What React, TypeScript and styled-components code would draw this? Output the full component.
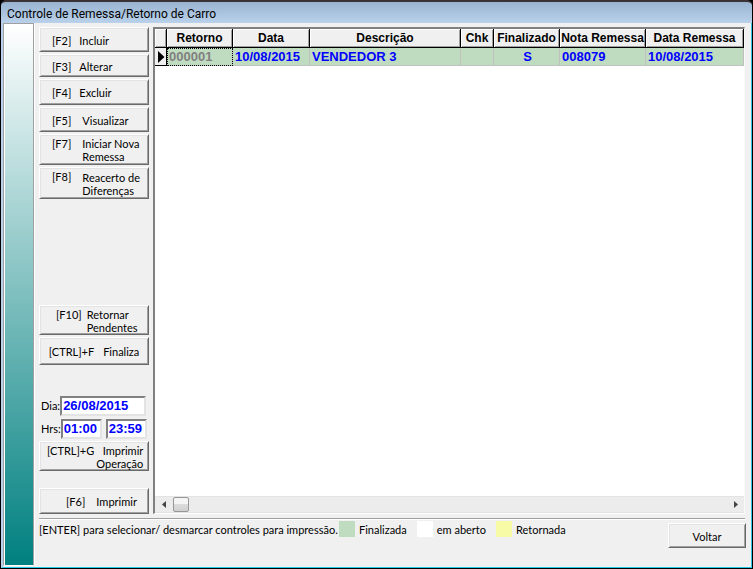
import React from "react";
import styled, { createGlobalStyle } from "styled-components";

const GlobalStyle = createGlobalStyle`
  * { box-sizing: border-box; }
  body {
    margin: 0;
    background: #000;
    font-family: Lato, sans-serif;
    font-size: 11px;
    line-height: 13px;
    color: #000;
  }
  button, input { font: inherit; color: inherit; border-radius: 0; margin: 0; }
`;

const Window = styled.div`
  display: flex;
  flex-direction: column;
  min-height: 100vh;
  padding: 0 1px 1px;
  background: #000;
`;

const TitleBar = styled.header`
  display: flex;
  align-items: center;
  height: 23px;
  padding: 2px 6px 0;
  border-top: 2px solid #3a3235;
  border-radius: 5px 5px 0 0;
  background: linear-gradient(#99b4d1, #b9d1ea);
`;

const Title = styled.h1`
  margin: 0;
  font: 400 12px/16px Roboto, "Open Sans", sans-serif;
`;

const Body = styled.div`
  display: flex;
  flex: 1;
  border: solid #b9d1ea;
  border-width: 0 1px 0 2px;
  border-right-color: #2fc6e8;
  border-bottom: 1px solid #22c8e6;
  background: #f0f0f0;
`;

const Strip = styled.div`
  width: 31px;
  margin-bottom: 1px;
  border: 1px solid #a0a0a0;
  border-bottom-color: #fff;
  box-shadow: inset 1px 1px #fff, 1px 0 #fff;
  background: linear-gradient(#fff, #7fbfbf 50%, #008080);
`;

const Main = styled.main`
  display: flex;
  flex: 1;
  flex-direction: column;
  min-width: 0;
  padding: 4px 6px 0 5px;
`;

const WorkArea = styled.div`
  display: flex;
  flex: 1;
  gap: 4px;
`;

const Sidebar = styled.div`
  display: flex;
  flex-direction: column;
  justify-content: space-between;
  width: 110px;
`;

const Group = styled.div`
  display: flex;
  flex-direction: column;
  gap: 2px;
`;

const Spacer = styled.div<{ $size: number }>`
  height: ${(p) => p.$size}px;
`;

const Button = styled.button<{ $height: number; $inset?: number; $gap?: number }>`
  display: flex;
  align-items: center;
  justify-content: ${(p) => (p.$inset ? "flex-start" : "center")};
  gap: ${(p) => p.$gap ?? 0}px;
  height: ${(p) => p.$height}px;
  padding: 1px 0 0 ${(p) => p.$inset ?? 0}px;
  border: 1px solid;
  border-color: #fff #696969 #696969 #fff;
  box-shadow: inset 1px 1px #e3e3e3, inset -1px -1px #a0a0a0;
  background: #f0f0f0;
  white-space: nowrap;
`;

const Key = styled.span`
  white-space: nowrap;
`;

const TopKey = styled(Key)`
  align-self: flex-start;
  margin-top: 1px;
`;

const Label = styled.span<{ $align?: "left" | "right" }>`
  text-align: ${(p) => p.$align ?? "left"};
`;

const Field = styled.div`
  display: flex;
  align-items: center;
  height: 21px;
`;

const FieldLabel = styled.label`
  width: 22px;
  padding-left: 2px;
`;

const TextBox = styled.input<{ $width: number }>`
  width: ${(p) => p.$width}px;
  height: 20px;
  margin-right: 4px;
  padding: 0 1px;
  border: 2px solid;
  border-color: #808080 #e3e3e3 #e3e3e3 #808080;
  background: #fff;
  color: #0000ff;
  font-family: "Liberation Sans", Arial, sans-serif;
  font-size: 13px;
  font-weight: 700;
`;

const GridFrame = styled.section`
  display: flex;
  flex: 1;
  flex-direction: column;
  justify-content: space-between;
  min-width: 0;
  border: 2px solid;
  border-color: #808080 #f8f8f8 #fff #808080;
  border-right-width: 1px;
  border-bottom-width: 1px;
  background: #fff;
`;

const Table = styled.table`
  width: 100%;
  border-collapse: separate;
  border-spacing: 0;
  table-layout: fixed;
  font-family: "Liberation Sans", Arial, sans-serif;
  font-weight: 700;
  line-height: 16px;
  white-space: nowrap;
`;

const Col = styled.col<{ $width?: number }>`
  width: ${(p) => (p.$width ? `${p.$width}px` : "auto")};
`;

const HeadCell = styled.th`
  height: 19px;
  padding: 0;
  border: solid #000;
  border-width: 0 1px 1px 0;
  box-shadow: inset 1px 1px #fff, inset -1px -1px #a0a0a0;
  background: #f0f0f0;
  font-size: 12px;
  text-align: center;
`;

const Cell = styled.td<{ $center?: boolean }>`
  height: 18px;
  padding: 0 0 0 2px;
  border: solid #c0c0c0;
  border-width: 0 1px 1px 0;
  background: #c0dcc0;
  color: #0000ff;
  font-size: 13px;
  text-align: ${(p) => (p.$center ? "center" : "left")};
`;

const ActiveCell = styled(Cell)`
  outline: 1px dotted #000;
  outline-offset: -1px;
  color: #808080;
`;

const Indicator = styled(Cell)`
  padding: 0 0 0 3px;
  border-color: #000;
  background: #f0f0f0;
  svg { display: block; }
`;

const ScrollBar = styled.div`
  display: flex;
  align-items: center;
  height: 17px;
  border: solid #e3e3e3;
  border-width: 1px 0;
  background: #ececec;
`;

const Arrow = styled.button`
  display: grid;
  place-items: center;
  width: 17px;
  height: 15px;
  padding: 0;
  border: 0;
  background: transparent;
`;

const Track = styled.div`
  flex: 1;
  height: 15px;
`;

const Thumb = styled.div`
  width: 16px;
  height: 15px;
  margin-left: 1px;
  border: 1px solid #979797;
  border-radius: 2px;
  background: linear-gradient(#f5f5f5 45%, #dcdcdc 50%, #d0d0d0);
`;

const Footer = styled.footer`
  display: flex;
  align-items: flex-start;
  height: 49px;
  margin-top: 4px;
  border-top: 1px solid #a0a0a0;
  box-shadow: inset 0 1px #fff;
`;

const Hint = styled.span`
  min-width: 300px;
  padding-top: 4px;
  white-space: nowrap;
`;

const Legend = styled.ul`
  display: flex;
  flex: 1;
  gap: 10px;
  margin: 2px 0 0;
  padding: 0;
  list-style: none;
`;

const LegendItem = styled.li`
  display: flex;
  align-items: center;
  gap: 4px;
  white-space: nowrap;
`;

const Swatch = styled.span<{ $color: string }>`
  width: 16px;
  height: 16px;
  background: ${(p) => p.$color};
`;

const BackButton = styled(Button)`
  width: 78px;
  margin: 4px -1px 0 0;
`;

const columns: { title: string; width?: number }[] = [
  { title: "", width: 12 },
  { title: "Retorno", width: 66 },
  { title: "Data", width: 77 },
  { title: "Descrição" },
  { title: "Chk", width: 33 },
  { title: "Finalizado", width: 66 },
  { title: "Nota Remessa", width: 86 },
  { title: "Data Remessa", width: 98 },
];

const actions = [
  { key: "[F2]", label: "Incluir", height: 25, gap: 8 },
  { key: "[F3]", label: "Alterar", height: 23, gap: 8 },
  { key: "[F4]", label: "Excluir", height: 26, gap: 8 },
  { key: "[F5]", label: "Visualizar", height: 25, gap: 11 },
];

const legend = [
  { label: "Finalizada", color: "#c0dcc0" },
  { label: "em aberto", color: "#ffffff" },
  { label: "Retornada", color: "#f8fba6" },
];

export default function App() {
  return (
    <>
      <GlobalStyle />
      <Window>
        <TitleBar>
          <Title>Controle de Remessa/Retorno de Carro</Title>
        </TitleBar>
        <Body>
          <Strip />
          <Main>
            <WorkArea>
              <Sidebar>
                <Group>
                  {actions.map((a) => (
                    <Button key={a.key} $height={a.height} $inset={12} $gap={a.gap}>
                      <Key>{a.key}</Key>
                      <Label>{a.label}</Label>
                    </Button>
                  ))}
                  <Button $height={31} $inset={12} $gap={11}>
                    <TopKey>[F7]</TopKey>
                    <Label>Iniciar Nova<br />Remessa</Label>
                  </Button>
                  <Button $height={32} $inset={12} $gap={11}>
                    <TopKey>[F8]</TopKey>
                    <Label>Reacerto de<br />Diferenças</Label>
                  </Button>
                </Group>
                <Group>
                  <Button $height={30} $inset={16} $gap={5}>
                    <TopKey>[F10]</TopKey>
                    <Label>Retornar<br />Pendentes</Label>
                  </Button>
                  <Button $height={28} $gap={9}>
                    <Key>[CTRL]+F</Key>
                    <Label>Finaliza</Label>
                  </Button>
                  <Spacer $size={26} />
                  <Field>
                    <FieldLabel htmlFor="dia">Dia:</FieldLabel>
                    <TextBox id="dia" $width={86} defaultValue="26/08/2015" />
                  </Field>
                  <Field>
                    <FieldLabel htmlFor="hora-inicial">Hrs:</FieldLabel>
                    <TextBox id="hora-inicial" $width={41} defaultValue="01:00" />
                    <TextBox aria-label="Hora final" $width={41} defaultValue="23:59" />
                  </Field>
                  <Button $height={30} $inset={7} $gap={2}>
                    <TopKey>[CTRL]+G</TopKey>
                    <Label $align="right">Imprimir<br />Operação</Label>
                  </Button>
                  <Spacer $size={13} />
                  <Button $height={26} $inset={26} $gap={11}>
                    <Key>[F6]</Key>
                    <Label>Imprimir</Label>
                  </Button>
                </Group>
              </Sidebar>
              <GridFrame>
                <Table>
                  <colgroup>
                    {columns.map((c) => <Col key={c.title} $width={c.width} />)}
                  </colgroup>
                  <thead>
                    <tr>
                      {columns.map((c) => <HeadCell key={c.title}>{c.title}</HeadCell>)}
                    </tr>
                  </thead>
                  <tbody>
                    <tr>
                      <Indicator>
                        <svg width="7" height="12" viewBox="0 0 7 12">
                          <path d="M0 0L6.5 6L0 12Z" fill="#000" />
                        </svg>
                      </Indicator>
                      <ActiveCell>000001</ActiveCell>
                      <Cell>10/08/2015</Cell>
                      <Cell>VENDEDOR 3</Cell>
                      <Cell />
                      <Cell $center>S</Cell>
                      <Cell>008079</Cell>
                      <Cell>10/08/2015</Cell>
                    </tr>
                  </tbody>
                </Table>
                <ScrollBar>
                  <Arrow aria-label="Rolar para a esquerda">
                    <svg width="4" height="7" viewBox="0 0 4 7"><path d="M4 0V7L0 3.5Z" fill="#444" /></svg>
                  </Arrow>
                  <Track><Thumb /></Track>
                  <Arrow aria-label="Rolar para a direita">
                    <svg width="4" height="7" viewBox="0 0 4 7"><path d="M0 0V7L4 3.5Z" fill="#444" /></svg>
                  </Arrow>
                </ScrollBar>
              </GridFrame>
            </WorkArea>
            <Footer>
              <Hint>[ENTER] para selecionar/ desmarcar controles para impressão.</Hint>
              <Legend>
                {legend.map((l) => (
                  <LegendItem key={l.label}>
                    <Swatch $color={l.color} />
                    {l.label}
                  </LegendItem>
                ))}
              </Legend>
              <BackButton $height={25}>Voltar</BackButton>
            </Footer>
          </Main>
        </Body>
      </Window>
    </>
  );
}
